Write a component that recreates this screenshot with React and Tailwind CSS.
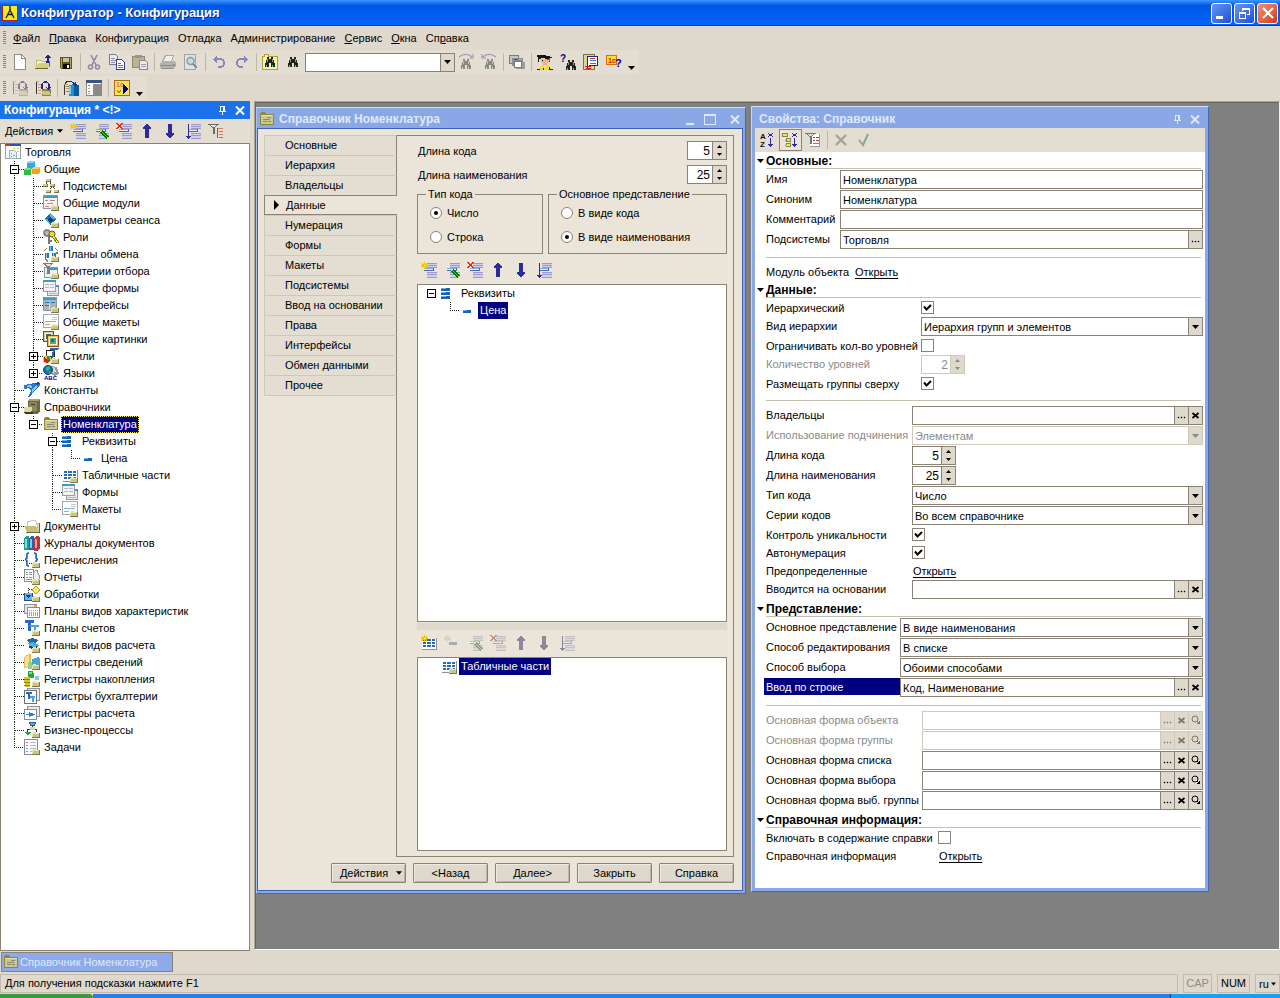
import { useId } from "react";
import clsx from "clsx";

const folder = (
  <>
    <path fill="#e8e4a4" d="M8 11h1v-1h3v1h4v5H8z" />
    <path fill="#c8c48c" d="M9 12h6v3H9z" />
    <path fill="#7d7948" d="M8 15h8v1H8zM15 11h1v5h-1z" />
  </>
);

const greenPencil = (
  <>
    <path fill="#0a6a10" d="M7 7h3v1h1v1h1v1h1v1h1v1h1v1h1v3h-3v-1h-1v-1h-1v-1h-1v-1H9v-1H8v-1H7z" />
    <path fill="#30d83c" d="M8 9h1v1h1v1h1v1h1v1h1v1h1v-1h-1v-1h-1v-1h-1v-1h-1V9H9V8H8z" />
    <path fill="#f0e040" d="M7 7h2v1H8v1H7zM14 14h2v2h-2z" />
  </>
);

const listLines = (
  <>
    <path fill="#9c9acc" d="M6 1h10v1H6zM6 5h10v1H6zM6 10h10v1H6zM6 15h10v1H6z" />
    <path fill="#cfceec" d="M6 2h10v1H6zM6 4h10v1H6zM6 11h10v1H6zM6 13h10v2H6z" />
    <path fill="#9c9acc" d="M6 3h10v1H6zM6 12h10v1H6z" />
    <path fill="#e4f0fa" d="M3 6h10v3H3z" />
    <path fill="#4a68b0" d="M3 8h10v1H3zM12 6h1v3h-1z" />
    <path fill="#8aa8d8" d="M3 6h9v1H3z" />
  </>
);

const star = (
  <>
    <path fill="#f0c400" d="M3 0h1v2h2v1h1v1H6v1H4v2H3V5H1V4H0V3h1V2h2zM1 1h1v1H1zM5 1h1v1H5zM1 5h1v1H1zM5 5h1v1H5z" />
    <path fill="#fff9a0" d="M3 3h1v1H3z" />
  </>
);

const table = (
  <>
    <path fill="#fff" d="M1 4h14v10H1z" />
    <path fill="#2a6cb0" d="M2 4h3v2H2zM6 4h4v2H6zM11 4h3v2h-3zM2 7h3v2H2zM6 7h4v2H6zM11 7h3v2h-3zM2 10h3v2H2zM6 10h4v2H6zM11 10h3v2h-3z" />
    <path fill="#8d9096" d="M1 14h15v1H1zM15 3h1v11h-1z" />
  </>
);

const binoculars = (
  <>
    <path fill="#20241f" d="M5 3h2v2h2V3h2v3h1v3h1v4H9V9H7v4H3V9h1V6h1z" />
    <path fill="#8f9a94" d="M5 5h1v3H5zM10 5h1v3h-1z" />
    <path fill="#3fd0d0" d="M4 11h1v2H4zM10 11h1v2h-1z" />
  </>
);

const icons = {
  app: (
    <>
      <path fill="#b02010" d="M0 0h16v16H0z" />
      <path fill="#f8e820" d="M1 1h14v14H1z" />
      <path shapeRendering="auto" fill="none" stroke="#1c1c1c" strokeWidth="1.3" d="M8 1v4M8 5L4 13M8 5l4 8M5 9.5h6" />
      <circle cx="8" cy="5" r="1.6" fill="#333" />
    </>
  ),
  newFile: (
    <>
      <path fill="#fff" stroke="#8b8b8b" d="M2.5.5h7l4 4v11h-11z" />
      <path fill="#8b8b8b" d="M9 1h1v3h4v1H9z" />
    </>
  ),
  open: (
    <>
      <path fill="#f6f2b0" stroke="#a39b58" strokeWidth=".6" d="M2 6h4l1 1h5v7H1z" />
      <path fill="#d8cf78" d="M4 9h11l-3 5H1z" />
      <path fill="#6d673a" d="M0 14h13v1H0zM14 7h1v6h-1z" />
      <path fill="#23238c" d="M12 0h1v1h1v1h1v1h1v1h-2v5h-3V7h1V4h-2V3h1V2h1V1h1z" />
    </>
  ),
  save: (
    <>
      <path fill="#5a5818" d="M2 3h12v12H3l-1-1z" />
      <path fill="#a8a560" d="M3 4h1v10H3zM12 4h1v10h-1z" />
      <path fill="#c6c2a4" d="M5 4h6v4H5z" />
      <path fill="#0a0a0a" d="M5 10h7v5H5z" />
      <path fill="#f4f4f4" d="M9 11h2v3H9z" />
    </>
  ),
  cut: (
    <path shapeRendering="auto" fill="none" stroke="#8a8ca4" strokeWidth="1.6" d="M5 1l5 10M11 1L6 11M6.500 13a2 2 0 1 1-4 0a2 2 0 1 1 4 0M13.500 13a2 2 0 1 1-4 0a2 2 0 1 1 4 0" />
  ),
  copy: (
    <>
      <path fill="#ecebf2" stroke="#7b7c94" d="M.5.5h6l2 2v8h-8z" />
      <path fill="#8d8ea8" d="M2 4h4v1H2zM2 6h5v1H2zM2 8h4v1H2z" />
      <path fill="#fff" stroke="#3a3c9a" d="M7.500 5.500h5l3 3v7h-8z" />
      <path fill="#6a6cb4" d="M9 9h3v1H9zM9 11h5v1H9zM9 13h5v1H9z" />
    </>
  ),
  paste: (
    <>
      <path fill="#b6b396" stroke="#8c8a74" d="M.5 2.500h12v11h-12z" />
      <path fill="#9a987f" d="M3 1h7v3H3z" />
      <path fill="#eceae4" stroke="#8587a0" d="M7.500 6.500h6l2 2v7h-8z" />
      <path fill="#9b9cb4" d="M9 10h5v1H9zM9 12h5v1H9z" />
    </>
  ),
  print: (
    <>
      <path fill="#f0efec" stroke="#a9a7a4" d="M5.500 1.500h8l-2 6h-9z" />
      <path fill="#b4b2b0" d="M2 7h12l2 1v5l-3 2H1l-1-2V9z" />
      <path fill="#908e8e" d="M0 11h13v1H0zM1 14h12v1H1zM13 10h2v2h-2z" />
    </>
  ),
  preview: (
    <>
      <path fill="#e3e2df" stroke="#a5a39e" d="M1.500.5h11v15h-11z" />
      <circle shapeRendering="auto" cx="7.500" cy="7" r="3.500" fill="#c3dcdf" stroke="#7ba0a8" strokeWidth="1.400" />
      <path stroke="#80909a" strokeWidth="2" d="M10 10l4 4" />
    </>
  ),
  undo: (
    <path fill="#8789b0" d="M6 1v3h5v1h2v2h1v4h-1v2h-2v1H7v-2h4v-1h1V7h-1V6H6v3H5V8H4V7H3V6H2V5h1V4h1V3h1V2h1z" />
  ),
  redo: (
    <path fill="#8789b0" d="M10 1v3H5v1H3v2H2v4h1v2h2v1h4v-2H5v-1H4V7h1V6h5v3h1V8h1V7h1V6h1V5h-1V4h-1V3h-1V2h-1z" />
  ),
  findFiles: (
    <>
      <path fill="#faf3a0" stroke="#a8a040" d="M.5 2.500h2v-2h4v2h9v13H.5z" />
      {binoculars}
    </>
  ),
  find: binoculars,
  findNext: (
    <>
      <g opacity=".45" transform="translate(0 2)">{binoculars}</g>
      <path shapeRendering="auto" fill="none" stroke="#9a9cba" strokeWidth="1.200" d="M1 3C5-.5 11-.5 14 3M15 0v4h-4" />
    </>
  ),
  findPrev: (
    <>
      <g opacity=".45" transform="translate(1 2)">{binoculars}</g>
      <path shapeRendering="auto" fill="none" stroke="#9a9cba" strokeWidth="1.200" d="M15 3C11-.5 5-.5 2 3M1 0v4h4" />
    </>
  ),
  windows: (
    <>
      <path fill="#c8c6c0" stroke="#7c7c7c" d="M.5 1.500h9v8h-9z" />
      <path fill="#8a8f98" d="M3 4h11v8H3z" />
      <path fill="#2a54c0" d="M5 5h4v1H5z" />
      <path fill="#e8b020" d="M10 5h3v1h-3z" />
      <path fill="#fff" stroke="#777" d="M5.500 7.500h7v6h-7z" />
      <path fill="#9c9c98" d="M13 8h3v7H7v-1h6z" />
    </>
  ),
  assistant: (
    <>
      <path fill="#f6b088" d="M4 5h7v2h1v2h-2v2H6V9H4z" />
      <path fill="#8a4c28" d="M10 4h3v4h-1V6h-2z" />
      <path fill="#151515" d="M0 1h9v1h4v1h2v1h-3v1H8V4H4v1H2v3H1V3H0zM5 6h1v1H5z" />
      <path fill="#f0e020" d="M2 14h1v-2h2v-1h2v3h2v-3h3v1h1v2h1v2H1z" />
      <path fill="#222" d="M0 15h3v1H0zM6 14h1v2H6zM12 13h1v2h3v1h-4z" />
    </>
  ),
  helpSearch: (
    <>
      <text x="0" y="8" fontSize="10" fontWeight="700" fill="#00008c">?</text>
      <g transform="translate(3 3)">{binoculars}</g>
    </>
  ),
  syntax: (
    <>
      <path fill="#d9d49a" stroke="#7b7828" d="M.5.5h11v15H.5z" />
      <path fill="#fff" stroke="#20209c" d="M4.500 2.500h10v9h-8l-2 2z" />
      <path fill="#d02020" d="M7 4h5v1H7zM2 12h6v1H2zM3 14h5v1H3z" />
      <path fill="#2080c0" d="M7 6h6v1H7zM7 9h6v1H7z" />
    </>
  ),
  about: (
    <>
      <path fill="#fbe020" stroke="#d87010" d="M.5 1.500h10v9H.5z" />
      <text x="2" y="9" fontSize="7" fontWeight="700" fill="#d02010">1c</text>
      <text x="9" y="13" fontSize="11" fontWeight="700" fill="#00008c">?</text>
    </>
  ),
  dbConfig: (
    <>
      <path fill="#e08a78" d="M1 1h3v1H1zM3 4h3v1H3zM3 10h3v1H3z" />
      <path fill="#7ac080" d="M3 7h3v1H3zM3 13h3v1H3z" />
      <path fill="#333" d="M1 2h1v12H1z" />
      <path fill="#8a8648" d="M7 9h9v7H7z" />
      <path fill="#c9c58a" d="M6 11h8l2 4H8z" />
      <path fill="none" stroke="#24248c" strokeWidth="1.400" d="M7 9V4l2-2h3l2 2v5M11.500 7.500l2 2 2-2" />
    </>
  ),
  compare: (
    <>
      <path fill="#e08a48" d="M1 4h4v1H1zM3 8h3v1H3z" />
      <path fill="#4aa05a" d="M3 6h3v1H3zM3 11h3v1H3z" />
      <path fill="#333" d="M1 5h1v10H1z" />
      <path fill="#1e8fd8" d="M6 5l5-1v12H6z" />
      <path fill="#0a5a9c" d="M11 5h5v11h-5z" />
      <path fill="#7cd0f8" d="M6 6h2v8H6z" />
      <path fill="none" stroke="#24248c" d="M2 3.500C4 .5 9 .5 11.500 4M9.500 4.500h4M12.500 2v4" />
    </>
  ),
  palette: (
    <>
      <path fill="#fff" stroke="#888" d="M.5.5h15v15H.5z" />
      <path fill="#3c5480" d="M0 0h16v3H0z" />
      <path fill="#8b8b8b" d="M7 4h8v11H7z" />
      <path fill="#50a050" d="M2 5h2v1H2zM2 11h2v1H2z" />
      <path fill="#e0a040" d="M2 8h2v1H2zM2 13h2v1H2z" />
    </>
  ),
  debug: (
    <>
      <path fill="#fbe45c" stroke="#b06818" d="M.5.5h15v15H.5z" />
      <text x="2" y="7" fontSize="7" fontWeight="700" fill="#d87830">1c</text>
      <path fill="#00008c" d="M9 4l6 5-6 5z" />
      <path fill="none" stroke="#b08a20" d="M3 10l2 3 2-3" />
    </>
  ),
  add: <>{listLines}{star}</>,
  edit: <>{listLines}{greenPencil}</>,
  remove: <>{listLines}<path fill="#e03010" d="M0 0h2v1h1v1h1V1h1V0h2v1H6v1H5v2h1v1h1v1H5V5H4V4H3v1H2v1H0V5h1V4h1V2H1V1H0z" /></>,
  up: <path fill="#2b2b9c" d="M7 1h2v1h1v1h1v1h1v2h-2v9H6V6H4V4h1V3h1V2h1z" />,
  down: <path fill="#2b2b9c" d="M6 1h4v9h2v2h-1v1h-1v1H9v1H7v-1H6v-1H5v-1H4v-2h2z" />,
  order: <>{listLines}<path fill="#2b2b9c" d="M3 1h1v12h2v1H5v1H4v1H3v-1H2v-1H1v-1h2z" /></>,
  filterTree: (
    <>
      <path fill="#6a6a68" d="M0 1h11v1H9v1H8v1H7v7H5V5H4V4H3V3H2V2H0z" />
      <path fill="#e8e8e4" d="M3 2h5v1H7v1H4V3H3z" />
      <path fill="#666" d="M9 5h1v10H9z" />
      <path fill="#e07868" d="M10 5h5v1h-5zM11 11h4v1h-4z" />
      <path fill="#50a860" d="M11 8h4v1h-4zM11 14h4v1h-4z" />
    </>
  ),
  addTable: <>{table}{star}</>,
  addRow: <>{star}<path fill="#4878b0" d="M5 7h8v3H5z" /></>,
  sortAz: (
    <>
      <text x="1" y="7" fontSize="8" fontWeight="700" fill="#111">A</text>
      <text x="1" y="15" fontSize="8" fontWeight="700" fill="#111">Z</text>
      <path fill="#2b2b9c" d="M9 1h1v1h3V1h1v1h-1v2h1v1h-1V4h-3v1H9V4h1V2H9zM11 6h1v6h2v1h-1v1h-1v1h-1v-1h-1v-1H9v-1h2z" />
    </>
  ),
  sortTree: (
    <>
      <path fill="#8c8838" d="M0 1h6v4H0zM4 6h5v4H4zM4 11h5v4H4zM2 5h1v9h2v-1H3V9h1V8H3V5z" />
      <path fill="#e4e09a" d="M1 2h4v2H1zM5 7h3v2H5zM5 12h3v2H5z" />
      <path fill="#2b2b9c" d="M10 1h1v1h3V1h1v1h-1v2h1v1h-1V4h-3v1h-1V4h1V2h-1zM12 6h1v6h2v1h-1v1h-1v1h-1v-1h-1v-1h-1v-1h2z" />
    </>
  ),
  filterList: (
    <>
      <path fill="#fff" d="M5 2h10v13H5z" />
      <path fill="#9a9a98" d="M14 2h1v13h-1zM5 14h10v1H5z" />
      <path fill="#c83030" d="M8 5h2v1H8zM11 5h3v1h-3zM8 8h2v1H8zM11 8h3v1h-3z" />
      <path fill="#888" d="M8 11h6v1H8z" />
      <path fill="#74767a" d="M0 1h11v1H9v1H8v1H7v8H5V5H4V4H3V3H2V2H0z" />
      <path fill="#d8d8d8" d="M3 2h5v1H7v1H4V3H3z" />
    </>
  ),
  cancel: <path stroke="#aaa09a" strokeWidth="2.400" shapeRendering="auto" d="M3 3l10 10M13 3L3 13" />,
  accept: <path fill="none" stroke="#8aa89a" strokeWidth="2" shapeRendering="auto" d="M3 8l4 5 5-11" />,
  configRoot: (
    <>
      <path fill="#fff" stroke="#9aa0a8" d="M.5.5h15v14H.5z" />
      <path fill="#c83828" d="M0 0h5v2H0z" />
      <path fill="#2a52b8" d="M5 0h11v2H5z" />
      <path fill="#e8c838" d="M8 4h2v1H8zM12 4h2v1h-2zM12 7h2v1h-2z" />
      <path fill="#e6f2f4" stroke="#9ab4bc" d="M4.500 6.500h5l2 2v6h-7z" />
      <path fill="#50b0b0" d="M6 9h1v1H6zM8 11h2v1H8zM6 12h1v1H6z" />
    </>
  ),
  common: (
    <>
      <path fill="#2ea8e8" d="M3 1l2-1h6v7l-1 1H3z" />
      <path fill="#86d4fa" d="M3 1l2-1h6l-1 2H3z" />
      <path fill="#2fb84c" d="M0 8l1-1h6v6l-1 1H0z" />
      <path fill="#7ae08c" d="M0 8l1-1h6L6 9H0z" />
      <path fill="#f0a010" d="M8 7l2-1h6v5l-2 2H8z" />
      <path fill="#fad060" d="M8 7l2-1h6l-2 2H8z" />
    </>
  ),
  subsystems: (
    <>
      <path fill="none" stroke="#444" strokeDasharray="1 1" d="M5 3L2 7M6 3l3 4M9 9l-4 4M10 9l4 4" />
      <path fill="#7a7440" d="M3 1h5v3H3zM0 6h5v3H0zM7 6h5v3H7zM3 12h5v3H3zM11 12h5v3h-5z" />
      <path fill="#d4cc90" d="M3 1h4v2H3zM0 6h4v2H0zM7 6h4v2H7zM3 12h4v2H3zM11 12h4v2h-4z" />
    </>
  ),
  modules: (
    <>
      <path fill="#f2f5f8" stroke="#8d96a0" d="M.5.5h14v13H.5z" />
      <path fill="#3a9ad0" d="M1 1h13v2H1z" />
      <path fill="#30c030" d="M1 1h2v1H1z" />
      <path fill="#e07878" d="M2 5h3v1H2zM7 5h5v1H7zM4 8h6v1H4zM2 11h4v1H2z" />
      {folder}
    </>
  ),
  params: (
    <>
      <path fill="#1a6ab0" d="M7 1l6 6-6 6-6-6z" />
      <path fill="#54b4ec" d="M7 1l6 6H7z" />
      <path fill="#3ac8c0" d="M1 7h6v6z" />
      <path fill="#0c3c7c" d="M7 5l3 3-3 3-2-3z" />
      {folder}
    </>
  ),
  roles: (
    <>
      <circle shapeRendering="auto" cx="4" cy="4" r="3" fill="#b8b8b4" stroke="#777" strokeWidth="1.500" />
      <path stroke="#777" strokeWidth="2" d="M6 6v9M6 12h3" />
      <circle shapeRendering="auto" cx="9" cy="5" r="3" fill="#e8d830" stroke="#6a6010" />
      <path stroke="#807418" strokeWidth="3" d="M10 7l5 7" />
      <path stroke="#f0e44c" d="M10 7l5 7" />
    </>
  ),
  exchange: (
    <>
      <path fill="#1a7cc8" d="M6 0h4v5H6zM2 7h4v5H2zM9 7h4v4H9z" />
      <path fill="#7cc8f4" d="M7 0h1v5H7zM3 7h1v5H3zM10 7h1v4h-1z" />
      <path fill="none" stroke="#b06a28" strokeWidth="1.400" d="M1 5l3-3M12 2l3 3M2 13l3 2M14 6v2" />
      {folder}
    </>
  ),
  criteria: (
    <>
      <path fill="#eef3f6" stroke="#8d96a0" d="M1.500 4.500h13v10h-13z" />
      <path fill="#3a9ad0" d="M4 5h11v2H4z" />
      <path fill="#e09a60" d="M3 10h4v1H3z" />
      <path fill="#7c7e80" d="M0 0h10v1H9v1H8v1H7v8H4V4H3V3H2V2H1V1H0z" />
      <path fill="#e4e4e4" d="M3 1h5v1H7v1H4V2H3z" />
      {folder}
    </>
  ),
  forms: (
    <>
      <path fill="#e8eaec" stroke="#8d96a0" d="M4.500 5.500h11v10h-11z" />
      <path fill="#3a9ad0" d="M11 5h5v2h-5z" />
      <path fill="#f2f3f4" stroke="#9a9ea4" d="M.5 1.500h12v10H.5z" />
      <path fill="#3a9ad0" d="M0 0h13v2H0z" />
      <path fill="#30c030" d="M0 0h2v2H0z" />
      <path fill="#b4b8be" d="M2 4h4v1H2zM7 4h4v1H7zM2 7h4v1H2zM7 7h4v1H7zM6 13h8v1H6z" />
    </>
  ),
  interfaces: (
    <>
      <path fill="#a9b4bc" stroke="#8d96a0" d="M.5.5h13v13H.5z" />
      <path fill="#3a9ad0" d="M1 1h12v2H1z" />
      <path fill="#30c030" d="M0 0h2v2H0z" />
      <path fill="#1f7cb8" d="M2 5h4v1H2zM8 5h4v1H8zM2 8h4v1H2z" />
      <path fill="#dfe5e8" d="M6 7h1v6H6z" />
      {folder}
    </>
  ),
  templates: (
    <>
      <path fill="#fdfdfd" stroke="#a4a8ac" d="M.5.5h15v13H.5z" />
      <path fill="#c4c6c8" d="M9 3h5v1H9zM9 5h5v1H9z" />
      <path fill="#d89c68" d="M2 10h5v1H2z" />
      <path fill="#7cb0dc" d="M2 7h11v1H2z" />
      {folder}
    </>
  ),
  pictures: (
    <>
      <path fill="#8a4c10" d="M0 0h11v11H0z" />
      <path fill="#e8c870" d="M1 1h9v9H1z" />
      <path fill="#fbf2d0" d="M2 2h7v7H2z" />
      <path fill="#3a5a9a" d="M3 3h5v5H3z" />
      <path fill="#8a4c10" d="M4 4h12v12H4z" />
      <path fill="#e8c060" d="M5 5h10v10H5z" />
      <path fill="#fbf2d0" d="M6 6h8v8H6z" />
      <path fill="#48b078" d="M7 7h6v6H7z" />
      <path fill="#3858b8" d="M8 8h3v3H8z" />
    </>
  ),
  styles: (
    <>
      <path fill="none" stroke="#222" d="M3.500 2.500h8v6h-8z" />
      <path fill="#2468b0" d="M7 0h9l-1 2h-3l-2 9H8l2-9H7z" />
      <circle shapeRendering="auto" cx="4" cy="11.500" r="4" fill="#e8c020" />
      <path fill="#d02020" d="M1 9l3 2v4l-3-1z" />
      <path fill="#20a040" d="M4 8l3 1v3H4z" />
      <path fill="#3050d0" d="M4 12h3l-2 3H4z" />
      {folder}
    </>
  ),
  languages: (
    <>
      <path fill="#9a9a9a" d="M8 1l6 1 2 7-4 2-4-2z" />
      <path fill="#d8d8d8" d="M9 2l3 1 1 4-4 1z" />
      <circle shapeRendering="auto" cx="5" cy="5" r="4.500" fill="#1870b8" stroke="#0c3c6c" />
      <path fill="#38b858" d="M3 2l3-1 1 2-2 3-2-1zM6 6l2 1-1 2H6z" />
      <text x="1" y="15" fontSize="6" fontWeight="700" fill="#00008c">ABC</text>
    </>
  ),
  constants: (
    <>
      <path fill="#2a78d0" d="M0 3l6-1 9-2 1 3-6 6-4 6H4l3-6-2-3-5 1z" />
      <path fill="#8cc8f8" d="M1 4l5-1 3 2-2 1zM8 8l3-4 3-2-1 3-5 6z" />
      <path fill="#0c4898" d="M11 1l4-1 1 2-4 1z" />
    </>
  ),
  catalogs: (
    <>
      <path fill="#6a6840" d="M4 1l2-1h10v12l-3 3H4z" />
      <path fill="#a8a478" d="M4 1l2-1h10l-2 2H4z" />
      <path fill="#8a865a" d="M5 3h8v9H5z" />
      <path fill="#dedaa8" d="M0 8h8v3l-2 2H0z" />
      <path fill="#3c3a20" d="M0 13h9v2H1zM7 5h4v1H7z" />
    </>
  ),
  catalog: (
    <>
      <path fill="#8c8838" d="M1 2h1V1h4v1h1v1h8v11H1z" />
      <path fill="#ccc88c" d="M2 4h12v9H2z" />
      <path fill="#e6e2b0" d="M2 4h12v1H2z" />
      <path fill="#8c8a6c" d="M8 6h4v1H8zM4 8h7v1H4zM4 10h4v1H4zM9 10h3v1H9z" />
    </>
  ),
  attributes: (
    <>
      <path fill="#1c62ac" d="M0 3h9v3H0zM0 7h9v3H0zM0 11h9v3H0z" />
      <path fill="#6cb0e8" d="M0 3h5v1H0zM0 7h5v1H0zM0 11h5v1H0z" />
    </>
  ),
  attribute: (
    <>
      <path fill="#1c62ac" d="M3 8h8v3H3z" />
      <path fill="#6cb0e8" d="M3 8h4v1H3z" />
    </>
  ),
  tables: <>{table}{folder}</>,
  documents: (
    <>
      <path fill="#e4dc90" d="M4 3h6l1 2h5v8H4z" />
      <path fill="#fff" stroke="#a8a888" strokeWidth=".6" d="M3 4l8-2 3 7H4z" />
      <path fill="#c8c078" d="M0 8h12l3 6H3z" />
      <path fill="#6a6640" d="M2 14h14v1H2zM15 5h1v9h-1z" />
    </>
  ),
  journals: (
    <>
      <path fill="#1c9c94" d="M0 3l3-2h2v14H0z" />
      <path fill="#7ce0d8" d="M1 4h2v9H1z" />
      <path fill="#1c64b8" d="M5 3l3-2h2v14H5z" />
      <path fill="#8cc4f4" d="M6 4h2v9H6z" />
      <path fill="#b83838" d="M10 3l3-2 3 1v11l-3 3h-3z" />
      <path fill="#f09c9c" d="M11 4h2v9h-2z" />
    </>
  ),
  enums: (
    <>
      <path fill="none" shapeRendering="auto" stroke="#1a5cac" strokeWidth="1.600" d="M5 1C2 1 3 3 3 5S2 7.500 1 7.500C2 7.500 3 8 3 10s-1 4 2 4M10 1c3 0 2 2 2 4s1 2.500 2 2.500c-1 0-2 .5-2 2.500" />
      <path fill="#333" d="M5 11h1v1H5zM7 11h1v1H7z" />
      {folder}
    </>
  ),
  reports: (
    <>
      <path fill="#f0f0ee" stroke="#909090" d="M6 4l7-3 3 8-4 4H7z" />
      <path fill="#fff" stroke="#8c8c8c" d="M.5.5h9v12h-9z" />
      <path fill="#8090a0" d="M2 3h2v1H2zM5 3h3v1H5zM2 5h2v1H2zM5 5h3v1H5zM2 8h2v1H2zM5 8h3v1H5zM2 10h6v1H2z" />
      {folder}
    </>
  ),
  processing: (
    <>
      <path fill="#f8ec70" stroke="#a89820" d="M12 0l4 4-4 4-4-4z" />
      <path fill="none" stroke="#333" strokeDasharray="1 1" d="M4.500 2v7M5 3.500h4" />
      <path fill="#6cb4e0" stroke="#1c4c9c" d="M.5 7v7.500h8V7" />
      <path fill="#1c2c8c" d="M2 9h5l-2 3H4z" />
      {folder}
    </>
  ),
  characteristics: (
    <>
      <path fill="#e4e6e8" stroke="#90949a" d="M.5 1.500h12v9H.5z" />
      <path fill="#e8a050" d="M10 2h3v2h-3z" />
      <path fill="#fff" stroke="#8a8e94" d="M3.500 4.500h12v10h-12z" />
      <path fill="#a0a4aa" d="M5 7h1v1H5zM7 7h1v1H7zM9 7h1v1H9zM11 7h1v1h-1zM13 7h1v1h-1zM5 9h1v4H5zM7 9h1v4H7zM9 9h1v4H9zM11 9h1v4h-1zM13 9h1v4h-1z" />
    </>
  ),
  accounts: (
    <>
      <path fill="#2a64d0" d="M1 0h9v3H7v8H4V3H1z" />
      <path fill="#48a0e8" d="M6 5h9v2h-3v5h-2V7H6z" />
      {folder}
    </>
  ),
  calculations: (
    <>
      <path fill="#1c6cac" d="M2 3l6-2 6 2-3 3H5z" />
      <path fill="#56aee0" d="M4 6l5-1 6 3-3 3-6-1z" />
      <path fill="#0c447c" d="M5 9l5 1 3-1v2l-4 1-4-1z" />
      {folder}
    </>
  ),
  infoRegisters: (
    <>
      <path fill="#f0b850" d="M0 3l5-3h2v12l-5 2H0z" />
      <path fill="#fbe0a0" d="M1 3l4-2v11l-4 1z" />
      <path fill="#8cd08c" d="M4 8h5v7H4z" />
      <path fill="#48a8c8" d="M8 5l6-2 2 1v7H8z" />
      {folder}
    </>
  ),
  accumulation: (
    <>
      <path fill="#2aa040" d="M4 0h5l1 3v4H4z" />
      <path fill="#84dc84" d="M5 1h3v2H5z" />
      <path fill="#d8c820" d="M0 6h6v10H1z" />
      <path fill="#8c8010" d="M0 8h6v1H0zM0 11h6v1H0zM0 14h6v1H0z" />
      <path fill="#8cc8e0" d="M11 5h4v4h-4z" />
      {folder}
    </>
  ),
  accounting: (
    <>
      <path fill="#e8eaec" stroke="#90949a" d="M3.500.5h12v12h-12z" />
      <path fill="#fff" stroke="#70747a" d="M.5 2.500h12v13H.5z" />
      <path fill="#2a64d0" d="M2 4h6v2H6v5H4V6H2z" />
      <path fill="#48a0e8" d="M6 8h5v2h-1v4H8v-4H6z" />
    </>
  ),
  calcRegisters: (
    <>
      <path fill="#e8eaec" stroke="#90949a" d="M3.500 1.500h12v10h-12z" />
      <path fill="#fff" stroke="#8a8e94" d="M.5 4.500h12v10H.5z" />
      <path fill="#2a7cd0" d="M2 9h3V7l6 2.500L5 12v-2H2z" />
    </>
  ),
  processes: (
    <>
      <path fill="#58a4ec" stroke="#1c5cac" d="M5.500.5h6l-1 3h-4z" />
      <path fill="none" stroke="#333" d="M8.500 4v2M3.500 10V7.500h9V10" />
      <path fill="#ecd870" d="M6 5h5v3H6z" />
      <path fill="#28a048" d="M0 10h7l-3 4z" />
      {folder}
    </>
  ),
  tasks: (
    <>
      <path fill="#fdfdff" stroke="#8888b8" d="M.5.5h13v15H.5z" />
      <path fill="#e07070" d="M2 3h2v1H2zM2 6h2v1H2z" />
      <path fill="#60b070" d="M2 9h2v1H2zM2 12h2v1H2z" />
      <path fill="#a8b8d8" d="M6 3h6v1H6zM6 6h6v1H6zM6 9h6v1H6zM6 12h3v1H6z" />
      {folder}
    </>
  ),
};

function Icon({ name, disabled }) {
  return (
    <svg
      width="16"
      height="16"
      viewBox="0 0 16 16"
      shapeRendering="crispEdges"
      aria-hidden="true"
      className={clsx("shrink-0 overflow-visible", disabled && "opacity-50 saturate-40")}
    >
      {icons[name]}
    </svg>
  );
}

function ToolButton({ name, title, disabled, active }) {
  return (
    <button
      type="button"
      aria-label={title}
      disabled={disabled}
      className={clsx(
        "flex h-[22px] w-[23px] shrink-0 items-center",
        active ? "border border-[#8a8275] bg-[#ebe5d9] pl-[2px]" : "pl-[3px]"
      )}
    >
      <Icon name={name} disabled={disabled} />
    </button>
  );
}

function Separator() {
  return <span className="mx-[2px] h-[18px] w-px shrink-0 bg-[#bdb6a6]" />;
}

function Grip() {
  return (
    <svg width="3" height="14" shapeRendering="crispEdges" className="mr-[3px] shrink-0" aria-hidden="true">
      <path stroke="#8a8275" strokeWidth="3" strokeDasharray="1 1" d="M1.500 0v14" />
    </svg>
  );
}

function Caret({ className }) {
  return (
    <svg width="7" height="4" viewBox="0 0 7 4" className={clsx("shrink-0", className)} aria-hidden="true">
      <path fill="currentColor" d="M0 0h7L3.500 4z" />
    </svg>
  );
}

function Pin() {
  return (
    <svg width="8" height="9" viewBox="0 0 8 9" shapeRendering="crispEdges" aria-hidden="true">
      <path fill="currentColor" d="M1 0h5v5h1v1H4v3H3V6H0V5h1zM2 1v4h2V1z" />
    </svg>
  );
}

function Cross() {
  return (
    <svg width="10" height="9" viewBox="0 0 10 9" aria-hidden="true">
      <path stroke="currentColor" strokeWidth="2" d="M1 .5l8 8M9 .5l-8 8" />
    </svg>
  );
}

/* ---------- tree ---------- */

function Guide({ line, node, last, sign }) {
  return (
    <svg width="19" height="17" shapeRendering="crispEdges" className="shrink-0" aria-hidden="true">
      <g fill="none" stroke="#222" strokeDasharray="1 1">
        {line && <path d="M9.500 0v17" />}
        {node && <path d={last ? "M9.500 0v8.500h10" : "M9.500 0v17M9.500 8.500h10"} />}
      </g>
      {sign && (
        <>
          <rect x="5.500" y="4.500" width="8" height="8" fill="#fff" stroke="#000" />
          <path stroke="#000" d={sign === "+" ? "M7 8.500h5M9.500 6v5" : "M7 8.500h5"} />
        </>
      )}
    </svg>
  );
}

// guides: one character per column. "|" line, "." empty, "T" branch, "L" last branch
function TreeRow({ guides = "", sign, icon, label, selected }) {
  const cols = guides.split("");
  return (
    <li className="flex h-[17px] items-start">
      {cols.map((c, i) => (
        <Guide
          key={i}
          line={c === "|"}
          node={c === "T" || c === "L"}
          last={c === "L"}
          sign={i === cols.length - 1 ? sign : undefined}
        />
      ))}
      <Icon name={icon} />
      <span
        className={clsx(
          "ml-[2px] h-[17px] px-[2px] leading-[17px] whitespace-nowrap",
          selected && "bg-[#000080] text-white",
          selected === "focus" && "outline-1 -outline-offset-1 outline-dotted outline-[#f0e860]"
        )}
      >
        {label}
      </span>
    </li>
  );
}

const configTree = [
  { icon: "configRoot", label: "Торговля" },
  { guides: "T", sign: "-", icon: "common", label: "Общие" },
  { guides: "|T", icon: "subsystems", label: "Подсистемы" },
  { guides: "|T", icon: "modules", label: "Общие модули" },
  { guides: "|T", icon: "params", label: "Параметры сеанса" },
  { guides: "|T", icon: "roles", label: "Роли" },
  { guides: "|T", icon: "exchange", label: "Планы обмена" },
  { guides: "|T", icon: "criteria", label: "Критерии отбора" },
  { guides: "|T", icon: "forms", label: "Общие формы" },
  { guides: "|T", icon: "interfaces", label: "Интерфейсы" },
  { guides: "|T", icon: "templates", label: "Общие макеты" },
  { guides: "|T", icon: "pictures", label: "Общие картинки" },
  { guides: "|T", sign: "+", icon: "styles", label: "Стили" },
  { guides: "|L", sign: "+", icon: "languages", label: "Языки" },
  { guides: "T", icon: "constants", label: "Константы" },
  { guides: "T", sign: "-", icon: "catalogs", label: "Справочники" },
  { guides: "|L", sign: "-", icon: "catalog", label: "Номенклатура", selected: "focus" },
  { guides: "|.T", sign: "-", icon: "attributes", label: "Реквизиты" },
  { guides: "|.|L", icon: "attribute", label: "Цена" },
  { guides: "|.T", icon: "tables", label: "Табличные части" },
  { guides: "|.T", icon: "forms", label: "Формы" },
  { guides: "|.L", icon: "templates", label: "Макеты" },
  { guides: "T", sign: "+", icon: "documents", label: "Документы" },
  { guides: "T", icon: "journals", label: "Журналы документов" },
  { guides: "T", icon: "enums", label: "Перечисления" },
  { guides: "T", icon: "reports", label: "Отчеты" },
  { guides: "T", icon: "processing", label: "Обработки" },
  { guides: "T", icon: "characteristics", label: "Планы видов характеристик" },
  { guides: "T", icon: "accounts", label: "Планы счетов" },
  { guides: "T", icon: "calculations", label: "Планы видов расчета" },
  { guides: "T", icon: "infoRegisters", label: "Регистры сведений" },
  { guides: "T", icon: "accumulation", label: "Регистры накопления" },
  { guides: "T", icon: "accounting", label: "Регистры бухгалтерии" },
  { guides: "T", icon: "calcRegisters", label: "Регистры расчета" },
  { guides: "T", icon: "processes", label: "Бизнес-процессы" },
  { guides: "L", icon: "tasks", label: "Задачи" },
];

function ConfigPanel() {
  return (
    <aside className="flex w-[250px] shrink-0 flex-col">
      <div className="flex h-[18px] items-center bg-[#1c72ea] pr-[5px] pl-1 text-white">
        <h2 className="flex-1 text-[12px] font-bold">Конфигурация * &lt;!&gt;</h2>
        <button type="button" aria-label="Закрепить" className="mr-2"><Pin /></button>
        <button type="button" aria-label="Закрыть"><Cross /></button>
      </div>
      <div className="flex h-6 items-center bg-[#e4ddd1] pl-[5px]">
        <button type="button" className="mr-1 flex w-[58px] items-center justify-between">
          Действия <Caret className="w-[6px]" />
        </button>
        <ToolButton name="add" title="Добавить" />
        <ToolButton name="edit" title="Изменить" />
        <ToolButton name="remove" title="Удалить" />
        <ToolButton name="up" title="Переместить вверх" />
        <ToolButton name="down" title="Переместить вниз" />
        <ToolButton name="order" title="Упорядочить" />
        <ToolButton name="filterTree" title="Отбор по подсистемам" />
      </div>
      <ul className="flex-1 border border-[#8a8275] bg-white pl-1">
        {configTree.map((row, i) => <TreeRow key={i} {...row} />)}
      </ul>
    </aside>
  );
}

/* ---------- form controls ---------- */

function Spinner({ id, value, disabled, width = "w-[44px]" }) {
  const line = disabled ? "border-[#cfc9bb]" : "border-[#8a8275]";
  return (
    <span className={clsx("flex h-[19px] shrink-0 border bg-white", width, line, disabled && "text-[#8a8a8a]")}>
      <input id={id} defaultValue={value} disabled={disabled} className="w-0 flex-1 pr-[2px] text-right text-[12px]" />
      <span className={clsx("flex w-[14px] flex-col items-center justify-around border-l bg-[#dfd8cc]", line)}>
        <button type="button" aria-label="Больше" disabled={disabled}>
          <svg width="5" height="3" className="block"><path fill="currentColor" d="M0 3h5L2.500 0z" /></svg>
        </button>
        <button type="button" aria-label="Меньше" disabled={disabled}>
          <svg width="5" height="3" className="block"><path fill="currentColor" d="M0 0h5L2.500 3z" /></svg>
        </button>
      </span>
    </span>
  );
}

function Checkbox({ id, checked }) {
  return (
    <span className="mt-[2px] grid size-[13px] shrink-0">
      <input
        id={id}
        type="checkbox"
        defaultChecked={checked}
        className="peer col-start-1 row-start-1 size-[13px] appearance-none border border-[#8a8275] bg-white"
      />
      <svg viewBox="0 0 13 13" className="pointer-events-none invisible col-start-1 row-start-1 peer-checked:visible">
        <path fill="none" stroke="#000" strokeWidth="2" d="M3 5.500l2.500 3L10 4" />
      </svg>
    </span>
  );
}

function Radio({ name, label, checked }) {
  return (
    <label className="flex h-6 items-center gap-[5px] pb-[2px] pl-1">
      <span className="grid size-3">
        <input
          type="radio"
          name={name}
          defaultChecked={checked}
          className="peer col-start-1 row-start-1 size-3 appearance-none rounded-full border border-[#8a8275] bg-white"
        />
        <span className="invisible col-start-1 row-start-1 size-1 place-self-center rounded-full bg-black peer-checked:visible" />
      </span>
      {label}
    </label>
  );
}

function Select({ id, value, disabled }) {
  const line = disabled ? "border-[#cfc9bb]" : "border-[#8a8275]";
  return (
    <span className={clsx("flex h-[19px] min-w-0 flex-1 border bg-white", line, disabled && "text-[#8a8a8a]")}>
      <select id={id} disabled={disabled} defaultValue={value} className="min-w-0 flex-1 appearance-none pl-[2px] disabled:opacity-100">
        <option>{value}</option>
      </select>
      <span className={clsx("flex w-[14px] items-center justify-center border-l bg-[#dfd8cc]", line)}>
        <Caret />
      </span>
    </span>
  );
}

const fieldButtons = {
  dots: {
    title: "Выбрать",
    shape: <path d="M2 8h1v1H2zM5 8h1v1H5zM8 8h1v1H8z" fill="currentColor" stroke="currentColor" strokeWidth=".4" />,
  },
  clear: {
    title: "Очистить",
    shape: <path d="M2.500 4l6 5M8.500 4l-6 5" stroke="currentColor" strokeWidth="1.800" />,
  },
  open: {
    title: "Открыть",
    shape: <path d="M8 5a3 3 0 1 1-6 0a3 3 0 1 1 6 0M7 7l3 3M7 9.500h3M9.500 7v3" fill="none" stroke="currentColor" />,
  },
};

function TextField({ id, value = "", buttons = [], disabled }) {
  const line = disabled ? "border-[#cfc9bb]" : "border-[#8a8275]";
  return (
    <span className={clsx("flex h-[19px] min-w-0 flex-1 border bg-white", line)}>
      <input id={id} defaultValue={value} disabled={disabled} className="min-w-0 flex-1 pl-[2px]" />
      {buttons.map((b) => (
        <button
          key={b}
          type="button"
          aria-label={fieldButtons[b].title}
          disabled={disabled}
          className={clsx("flex w-[14px] items-center justify-center border-l bg-[#dfd8cc]", line, disabled && "text-[#7a766c]")}
        >
          <svg width="11" height="13" viewBox="0 0 11 13" aria-hidden="true">{fieldButtons[b].shape}</svg>
        </button>
      ))}
    </span>
  );
}

function PushButton({ children, menu }) {
  return (
    <button
      type="button"
      className="flex h-5 w-[75px] items-center justify-center rounded-[1px] border border-[#8a8275] bg-[#dfd8cc] shadow-[inset_1px_1px_0_#f0ebe2,inset_-1px_-1px_0_#bdb5a6]"
    >
      {menu ? <span className="flex-1 text-center">{children}</span> : children}
      {menu && <Caret className="mr-[3px] w-[6px]" />}
    </button>
  );
}

/* ---------- catalog window ---------- */

const tabs = [
  "Основные", "Иерархия", "Владельцы", "Данные", "Нумерация", "Формы", "Макеты",
  "Подсистемы", "Ввод на основании", "Права", "Интерфейсы", "Обмен данными", "Прочее",
];

function CatalogWindow() {
  return (
    <section className="absolute top-1 bottom-[55px] left-0 flex w-[490px] flex-col border border-t-[#d3e0fa] border-r-[#4767b0] border-b-[#4767b0] border-l-[#a8c0f0] bg-[#8ba8e6] pr-[2px] pb-[2px]">
      <header className="flex h-5 items-center pt-[2px] pr-[3px] pl-[2px] text-[#dfe8fb]">
        <Icon name="catalog" />
        <h2 className="ml-1 flex-1 text-[12px] font-bold">Справочник Номенклатура</h2>
        <button type="button" aria-label="Свернуть" className="mr-[9px] flex h-3 w-[9px] items-end">
          <span className="h-[2px] w-2 bg-[#dfe8fb]" />
        </button>
        <button type="button" aria-label="Развернуть" className="mr-[14px] h-[11px] w-3 border border-t-2 border-[#dfe8fb]" />
        <button type="button" aria-label="Закрыть"><Cross /></button>
      </header>
      <div className="flex flex-1 flex-col border border-[#3f62b0] bg-[#ebe5d9] pt-[6px] pr-2 pb-[7px] pl-[6px]">
        <div className="flex flex-1">
          <nav className="flex w-[133px] shrink-0 flex-col">
            {tabs.map((tab) =>
              tab === "Данные" ? (
                <button key={tab} type="button" className="flex h-5 items-center border-y border-l border-[#8a8275] pl-[9px]">
                  <svg width="5" height="10" className="mr-[7px]" aria-hidden="true"><path d="M0 0l5 5-5 5z" /></svg>
                  {tab}
                </button>
              ) : (
                <button key={tab} type="button" className="flex h-5 items-center border-t border-r border-l border-t-[#cfc8ba] border-r-[#8a8275] border-l-[#cfc8ba] bg-[#e4ddd1] pb-[2px] pl-5">
                  {tab}
                </button>
              )
            )}
            <div className="flex-1 border-t border-r border-t-[#cfc8ba] border-r-[#8a8275]" />
          </nav>
          <div className="flex flex-1 flex-col border-y border-r border-[#8a8275] pt-[5px] pr-[6px] pb-[5px] pl-5">
            <div className="flex items-center justify-between pl-px">
              <label htmlFor="code-length">Длина кода</label>
              <Spinner id="code-length" value="5" width="w-10" />
            </div>
            <div className="mt-[5px] flex items-center justify-between pl-px">
              <label htmlFor="name-length">Длина наименования</label>
              <Spinner id="name-length" value="25" width="w-10" />
            </div>
            <div className="mt-[2px] flex gap-[5px]">
              <fieldset className="w-[126px] border border-[#8a8275] pb-[3px] pl-2">
                <legend className="h-4 px-[2px] leading-4">Тип кода</legend>
                <Radio name="codeType" label="Число" checked />
                <Radio name="codeType" label="Строка" />
              </fieldset>
              <fieldset className="flex-1 border border-[#8a8275] pb-[3px] pl-2">
                <legend className="h-4 px-[2px] leading-4">Основное представление</legend>
                <Radio name="mainView" label="В виде кода" />
                <Radio name="mainView" label="В виде наименования" checked />
              </fieldset>
            </div>
            <div className="mt-[5px] flex pl-px">
              <ToolButton name="add" title="Добавить" />
              <ToolButton name="edit" title="Изменить" />
              <ToolButton name="remove" title="Удалить" />
              <ToolButton name="up" title="Вверх" />
              <ToolButton name="down" title="Вниз" />
              <ToolButton name="order" title="Упорядочить" />
            </div>
            <ul className="mt-[3px] flex-[339] border border-[#8a8275] bg-white pl-1">
              <TreeRow guides="." sign="-" icon="attributes" label="Реквизиты" />
              <TreeRow guides=".L" icon="attribute" label="Цена" selected />
            </ul>
            <div className="mt-px h-[7px] bg-[#dfd8cc]" />
            <div className="mt-[2px] flex pl-px">
              <ToolButton name="addTable" title="Добавить табличную часть" />
              <ToolButton name="addRow" title="Добавить реквизит" disabled />
              <ToolButton name="edit" title="Изменить" disabled />
              <ToolButton name="remove" title="Удалить" disabled />
              <ToolButton name="up" title="Вверх" disabled />
              <ToolButton name="down" title="Вниз" disabled />
              <ToolButton name="order" title="Упорядочить" disabled />
            </div>
            <ul className="mt-[3px] flex-[193] border border-[#8a8275] bg-white pl-1">
              <TreeRow guides="." icon="tables" label="Табличные части" selected />
            </ul>
          </div>
        </div>
        <div className="mt-[6px] flex justify-end gap-[7px]">
          <PushButton menu>Действия</PushButton>
          <PushButton>&lt;Назад</PushButton>
          <PushButton>Далее&gt;</PushButton>
          <PushButton>Закрыть</PushButton>
          <PushButton>Справка</PushButton>
        </div>
      </div>
    </section>
  );
}

/* ---------- properties window ---------- */

const sections = [
  {
    title: "Основные:",
    groups: [
      {
        width: "w-[74px]",
        rows: [
          { label: "Имя", type: "text", value: "Номенклатура" },
          { label: "Синоним", type: "text", value: "Номенклатура" },
          { label: "Комментарий", type: "text" },
          { label: "Подсистемы", type: "text", value: "Торговля", buttons: ["dots"] },
        ],
      },
      { width: "w-[88px]", rows: [{ label: "Модуль объекта", type: "link" }] },
    ],
  },
  {
    title: "Данные:",
    groups: [
      {
        width: "w-[155px]",
        rows: [
          { label: "Иерархический", type: "check", value: true },
          { label: "Вид иерархии", type: "select", value: "Иерархия групп и элементов" },
          { label: "Ограничивать кол-во уровней", type: "check" },
          { label: "Количество уровней", type: "spin", value: "2", disabled: true },
          { label: "Размещать группы сверху", type: "check", value: true },
        ],
      },
      {
        width: "w-[146px]",
        rows: [
          { label: "Владельцы", type: "text", buttons: ["dots", "clear"] },
          { label: "Использование подчинения", type: "select", value: "Элементам", disabled: true },
          { label: "Длина кода", type: "spin", value: "5" },
          { label: "Длина наименования", type: "spin", value: "25" },
          { label: "Тип кода", type: "select", value: "Число" },
          { label: "Серии кодов", type: "select", value: "Во всем справочнике" },
          { label: "Контроль уникальности", type: "check", value: true },
          { label: "Автонумерация", type: "check", value: true },
          { label: "Предопределенные", type: "link" },
          { label: "Вводится на основании", type: "text", buttons: ["dots", "clear"] },
        ],
      },
    ],
  },
  {
    title: "Представление:",
    groups: [
      {
        width: "w-[134px]",
        rows: [
          { label: "Основное представление", type: "select", value: "В виде наименования" },
          { label: "Способ редактирования", type: "select", value: "В списке" },
          { label: "Способ выбора", type: "select", value: "Обоими способами" },
          { label: "Ввод по строке", type: "text", value: "Код, Наименование", buttons: ["dots", "clear"], selected: true },
        ],
      },
      {
        width: "w-[156px]",
        rows: [
          { label: "Основная форма объекта", type: "text", buttons: ["dots", "clear", "open"], disabled: true },
          { label: "Основная форма группы", type: "text", buttons: ["dots", "clear", "open"], disabled: true },
          { label: "Основная форма списка", type: "text", buttons: ["dots", "clear", "open"] },
          { label: "Основная форма выбора", type: "text", buttons: ["dots", "clear", "open"] },
          { label: "Основная форма выб. группы", type: "text", buttons: ["dots", "clear", "open"] },
        ],
      },
    ],
  },
  {
    title: "Справочная информация:",
    groups: [
      {
        width: "w-[172px]",
        rows: [
          { label: "Включать в содержание справки", type: "check" },
          { label: "Справочная информация", type: "link" },
        ],
      },
    ],
  },
];

function PropertyRow({ label, type, value, buttons, disabled, selected, width }) {
  const id = useId();
  const short = type === "check" || type === "link";
  return (
    <div className={clsx("flex items-start pr-[2px] pl-[9px]", short ? "h-[18px]" : "h-5")}>
      <label
        htmlFor={id}
        className={clsx(
          "box-content h-[17px] shrink-0 pl-[2px] leading-[18px] whitespace-nowrap",
          width,
          disabled && "text-[#8a8a8a]",
          selected && "bg-[#000080] text-white"
        )}
      >
        {label}
      </label>
      {type === "text" && <TextField id={id} value={value} buttons={buttons} disabled={disabled} />}
      {type === "select" && <Select id={id} value={value} disabled={disabled} />}
      {type === "spin" && <Spinner id={id} value={value} disabled={disabled} />}
      {type === "check" && <Checkbox id={id} checked={value} />}
      {type === "link" && <a id={id} href="#open" className="pl-px leading-[18px] underline underline-offset-2">Открыть</a>}
    </div>
  );
}

function PropertiesWindow() {
  return (
    <section className="absolute top-[3px] bottom-[57px] left-[495px] flex w-[458px] flex-col border border-t-[#d3e0fa] border-r-[#4767b0] border-b-[#4767b0] border-l-[#c3d4f6] bg-[#8ba8e6] px-[3px] pb-[3px]">
      <header className="flex h-[21px] items-center pt-[3px] pr-[5px] pl-1 text-[#dfe8fb]">
        <h2 className="flex-1 text-[12px] font-bold">Свойства: Справочник</h2>
        <button type="button" aria-label="Закрепить" className="mr-2"><Pin /></button>
        <button type="button" aria-label="Закрыть"><Cross /></button>
      </header>
      <div className="flex h-6 items-center bg-[#e4ddd1] pl-px">
        <ToolButton name="sortAz" title="По алфавиту" />
        <ToolButton name="sortTree" title="По категориям" active />
        <ToolButton name="filterList" title="Только важные" />
        <Separator />
        <ToolButton name="cancel" title="Отмена" />
        <ToolButton name="accept" title="Принять" />
      </div>
      <div className="flex-1 bg-white">
        {sections.map((section) => (
          <div key={section.title}>
            <h3 className="mb-px flex h-[17px] items-center pl-[2px] text-[12px] font-bold">
              <Caret className="mr-[2px]" />
              <span className="mr-1 flex-1 self-stretch border-b border-[#c6c0b0] leading-[18px]">{section.title}</span>
            </h3>
            {section.groups.map((group, i) => (
              <div key={i}>
                {i > 0 && <hr className="mt-[7px] mr-1 mb-[5px] ml-[11px] border-[#c6c0b0]" />}
                {group.rows.map((row) => <PropertyRow key={row.label} width={group.width} {...row} />)}
              </div>
            ))}
          </div>
        ))}
      </div>
    </section>
  );
}

/* ---------- frame ---------- */

function TitleBar() {
  return (
    <header className="flex h-[26px] items-center gap-[2px] bg-linear-to-b from-[#3d95ff] via-[#0058e6] via-20% to-[#0064fc] pr-[2px] pl-[2px] shadow-[inset_0_-1px_0_#0038b8]">
      <Icon name="app" />
      <h1 className="ml-[1px] flex-1 text-[13px] font-bold text-white [text-shadow:1px_1px_#0a2a80]">
        Конфигуратор - Конфигурация
      </h1>
      <button type="button" aria-label="Свернуть" className="flex size-[21px] items-end rounded-[3px] border border-white bg-linear-to-br from-[#6a94f0] to-[#1c50d8] p-[4px]">
        <span className="h-[3px] w-[7px] bg-white" />
      </button>
      <button type="button" aria-label="Восстановить" className="flex size-[21px] items-center justify-center rounded-[3px] border border-white bg-linear-to-br from-[#6a94f0] to-[#1c50d8]">
        <svg width="11" height="11" shapeRendering="crispEdges" aria-hidden="true">
          <path fill="none" stroke="#fff" d="M3.500 3V.5h7v6H8M3 1.500h8M.5 4.500h6v6h-6zM0 5.500h7" />
        </svg>
      </button>
      <button type="button" aria-label="Закрыть" className="flex size-[21px] items-center justify-center rounded-[3px] border border-white bg-linear-to-br from-[#f09070] to-[#d03808]">
        <svg width="12" height="12" aria-hidden="true">
          <path stroke="#fff" strokeWidth="2.200" d="M1 1l10 10M11 1L1 11" />
        </svg>
      </button>
    </header>
  );
}

function MenuBar() {
  return (
    <nav className="flex h-6 items-center pl-[3px]">
      <Grip />
      <div className="flex gap-[9px] pl-1">
        <button type="button"><u>Ф</u>айл</button>
        <button type="button"><u>П</u>равка</button>
        <button type="button">Конфигурация</button>
        <button type="button">Отладка</button>
        <button type="button">Администрирование</button>
        <button type="button"><u>С</u>ервис</button>
        <button type="button"><u>О</u>кна</button>
        <button type="button">Сп<u>р</u>авка</button>
      </div>
    </nav>
  );
}

function Toolbars() {
  return (
    <div className="flex flex-col items-start gap-[2px] pb-px">
      <div className="flex h-6 items-center bg-[#e4ddd1] pr-1 pl-[3px]">
        <Grip />
        <ToolButton name="newFile" title="Новый" />
        <ToolButton name="open" title="Открыть" />
        <ToolButton name="save" title="Сохранить" />
        <Separator />
        <ToolButton name="cut" title="Вырезать" />
        <ToolButton name="copy" title="Копировать" />
        <ToolButton name="paste" title="Вставить" />
        <Separator />
        <ToolButton name="print" title="Печать" />
        <ToolButton name="preview" title="Просмотр" />
        <Separator />
        <ToolButton name="undo" title="Отменить" />
        <ToolButton name="redo" title="Вернуть" />
        <Separator />
        <ToolButton name="findFiles" title="Глобальный поиск" />
        <ToolButton name="find" title="Найти" />
        <span className="flex h-[19px] w-[150px] border border-[#8a8275] bg-white">
          <select aria-label="Строка поиска" className="min-w-0 flex-1 appearance-none" />
          <span className="flex w-[14px] items-center justify-center border-l border-[#8a8275] bg-[#dfd8cc]">
            <Caret />
          </span>
        </span>
        <ToolButton name="findNext" title="Найти далее" />
        <ToolButton name="findPrev" title="Найти ранее" />
        <Separator />
        <ToolButton name="windows" title="Окна" />
        <Separator />
        <ToolButton name="assistant" title="Синтаксис-помощник" />
        <ToolButton name="helpSearch" title="Поиск в справке" />
        <ToolButton name="syntax" title="Содержание справки" />
        <ToolButton name="about" title="О программе" />
        <button type="button" aria-label="Настройка панели" className="mt-3 ml-[2px]"><Caret /></button>
      </div>
      <div className="flex h-6 items-center bg-[#e4ddd1] pr-1 pl-[3px]">
        <Grip />
        <ToolButton name="dbConfig" title="Открыть конфигурацию" disabled />
        <ToolButton name="dbConfig" title="Закрыть конфигурацию" />
        <Separator />
        <ToolButton name="compare" title="Обновить конфигурацию базы данных" />
        <ToolButton name="palette" title="Палитра свойств" />
        <Separator />
        <ToolButton name="debug" title="Начать отладку" />
        <button type="button" aria-label="Настройка панели" className="mt-3 ml-[2px]"><Caret /></button>
      </div>
    </div>
  );
}

function StatusBar() {
  return (
    <footer className="mt-px mb-px flex h-[19px] gap-[5px]">
      <p className="flex-1 border border-[#c2bbab] pl-1 leading-[17px]">Для получения подсказки нажмите F1</p>
      <span className="w-[29px] border border-[#c2bbab] text-center leading-[17px] text-[#8a8a8a]">CAP</span>
      <span className="w-[33px] border border-[#c2bbab] text-center leading-[17px]">NUM</span>
      <button type="button" className="flex w-[25px] items-center justify-center gap-[2px] border border-[#c2bbab]">
        ru <Caret className="w-[5px]" />
      </button>
    </footer>
  );
}

export default function App() {
  return (
    <div className="flex min-h-screen flex-col bg-[#dfd8cc] font-['Liberation_Sans',Arial,sans-serif] text-[11px] leading-[14px] text-black">
      <TitleBar />
      <MenuBar />
      <Toolbars />
      <main className="flex flex-1 gap-1">
        <ConfigPanel />
        <div className="mb-px flex flex-1 border border-t-[#aca594] border-r-[#f4f1e8] border-b-white border-l-[#aca594]">
          <div className="relative flex-1 overflow-hidden border-t border-l border-[#6b665c] bg-[#808080]">
            <CatalogWindow />
            <PropertiesWindow />
          </div>
        </div>
      </main>
      <div className="flex h-[22px] items-center pl-px">
        <button type="button" className="flex h-5 w-[172px] items-center gap-px border border-[#8a8275] bg-[#8faae8] pl-px text-[#dfe8fb]">
          <Icon name="catalog" />
          Справочник Номенклатура
        </button>
      </div>
      <StatusBar />
      <div className="flex h-1">
        <div className="w-[93px] rounded-tr bg-[#3c9a3c]" />
        <div className="flex-1 bg-[#2f7ae8]" />
        <div className="w-[110px] border-l border-[#0c3c9c] bg-[#18a0f0]" />
      </div>
    </div>
  );
}
